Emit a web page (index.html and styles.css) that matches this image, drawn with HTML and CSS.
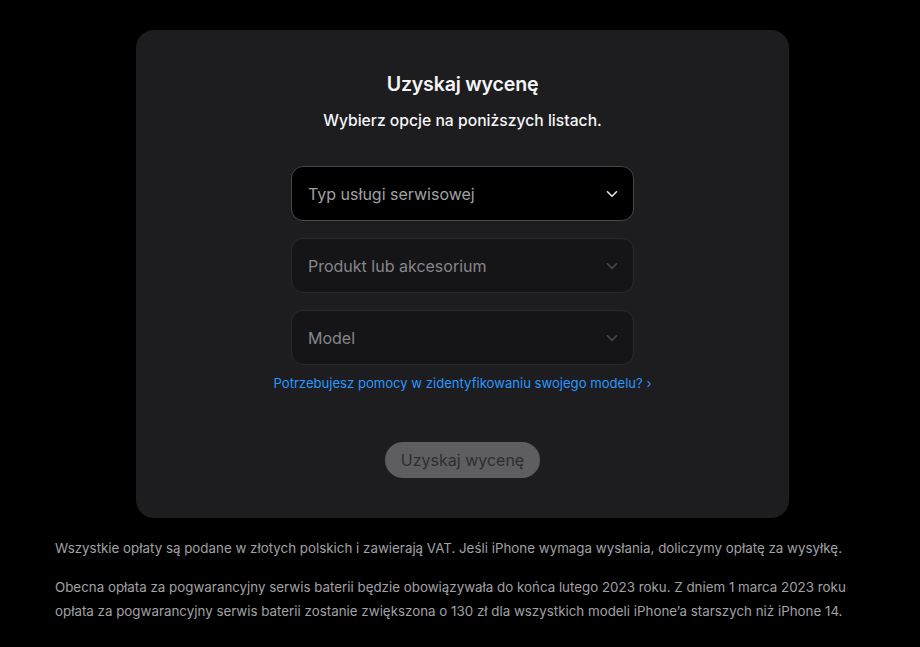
FILE: index.html
```html
<!DOCTYPE html>
<html lang="pl">
<head>
    <meta charset="UTF-8">
    <meta name="viewport" content="width=device-width, initial-scale=1.0">
    <title>Uzyskaj wycenę</title>
    <link rel="stylesheet" href="styles.css">
</head>
<body>
    <div class="page">
        <section class="quote-card">
            <h2 class="quote-title">Uzyskaj wycenę</h2>
            <p class="quote-subtitle">Wybierz opcje na poniższych listach.</p>

            <div class="fields">
                <div class="select select-active">
                    <span>Typ usługi serwisowej</span>
                    <svg class="chevron" width="12" height="8" viewBox="0 0 12 8"><path d="M1.5 1.8 6 6.2l4.5-4.4" fill="none" stroke="currentColor" stroke-width="1.6" stroke-linecap="round" stroke-linejoin="round"/></svg>
                </div>
                <div class="select select-disabled">
                    <span>Produkt lub akcesorium</span>
                    <svg class="chevron" width="12" height="8" viewBox="0 0 12 8"><path d="M1.5 1.8 6 6.2l4.5-4.4" fill="none" stroke="currentColor" stroke-width="1.6" stroke-linecap="round" stroke-linejoin="round"/></svg>
                </div>
                <div class="select select-disabled">
                    <span>Model</span>
                    <svg class="chevron" width="12" height="8" viewBox="0 0 12 8"><path d="M1.5 1.8 6 6.2l4.5-4.4" fill="none" stroke="currentColor" stroke-width="1.6" stroke-linecap="round" stroke-linejoin="round"/></svg>
                </div>
            </div>

            <a class="help-link" href="#">Potrzebujesz pomocy w zidentyfikowaniu swojego modelu? ›</a>

            <button class="quote-button" disabled>Uzyskaj wycenę</button>
        </section>

        <div class="notes">
            <p>Wszystkie opłaty są podane w złotych polskich i zawierają VAT. Jeśli iPhone wymaga wysłania, doliczymy opłatę za wysyłkę.</p>
            <p>Obecna opłata za pogwarancyjny serwis baterii będzie obowiązywała do końca lutego 2023 roku. Z dniem 1 marca 2023 roku opłata za pogwarancyjny serwis baterii zostanie zwiększona o 130 zł dla wszystkich modeli iPhone’a starszych niż iPhone 14.</p>
        </div>
    </div>
</body>
</html>
```

FILE: styles.css
```css
body {
    margin: 0;
    background: #000;
    color: #f5f5f7;
    font-family: Inter, "Noto Sans", sans-serif;
}

.page {
    padding: 30px 0 0 55px;
    width: 810px;
}

.quote-card {
    margin-left: 81px;
    width: 653px;
    height: 488px;
    box-sizing: border-box;
    background: #1d1d1f;
    border-radius: 18px;
    padding-top: 41px;
    display: flex;
    flex-direction: column;
    align-items: center;
}

.quote-title {
    margin: 0;
    font-size: 19.6px;
    font-weight: 600;
    line-height: 26px;
    letter-spacing: -0.2px;
}

.quote-subtitle {
    margin: 13px 0 0;
    font-size: 15.7px;
    font-weight: 500;
    line-height: 22px;
}

.fields {
    margin-top: 34px;
    display: flex;
    flex-direction: column;
    gap: 17px;
    width: 343px;
}

.select {
    height: 55px;
    box-sizing: border-box;
    border-radius: 12px;
    padding: 0 15px 0 16px;
    display: flex;
    align-items: center;
    justify-content: space-between;
    font-size: 16px;
}

.select-active {
    background: #000;
    border: 1px solid #48484a;
    color: #a1a1a6;
}

.select-active .chevron {
    color: #e8e8ed;
}

.select-disabled {
    background: #151517;
    border: 1px solid #2a2a2c;
    color: #86868b;
}

.select-disabled .chevron {
    color: #4a4a4d;
}

.help-link {
    margin-top: 9px;
    color: #2997ff;
    font-size: 13.1px;
    line-height: 18px;
    text-decoration: none;
}

.quote-button {
    margin-top: 50px;
    height: 36px;
    width: 155px;
    border: none;
    border-radius: 18px;
    background: #5e5e60;
    color: #2d2d2f;
    font-family: inherit;
    font-size: 16px;
}

.notes {
    margin-top: 18px;
    color: #a1a1a6;
    font-size: 13.35px;
    line-height: 24px;
}

.notes p {
    margin: 0 0 15px;
}
```
